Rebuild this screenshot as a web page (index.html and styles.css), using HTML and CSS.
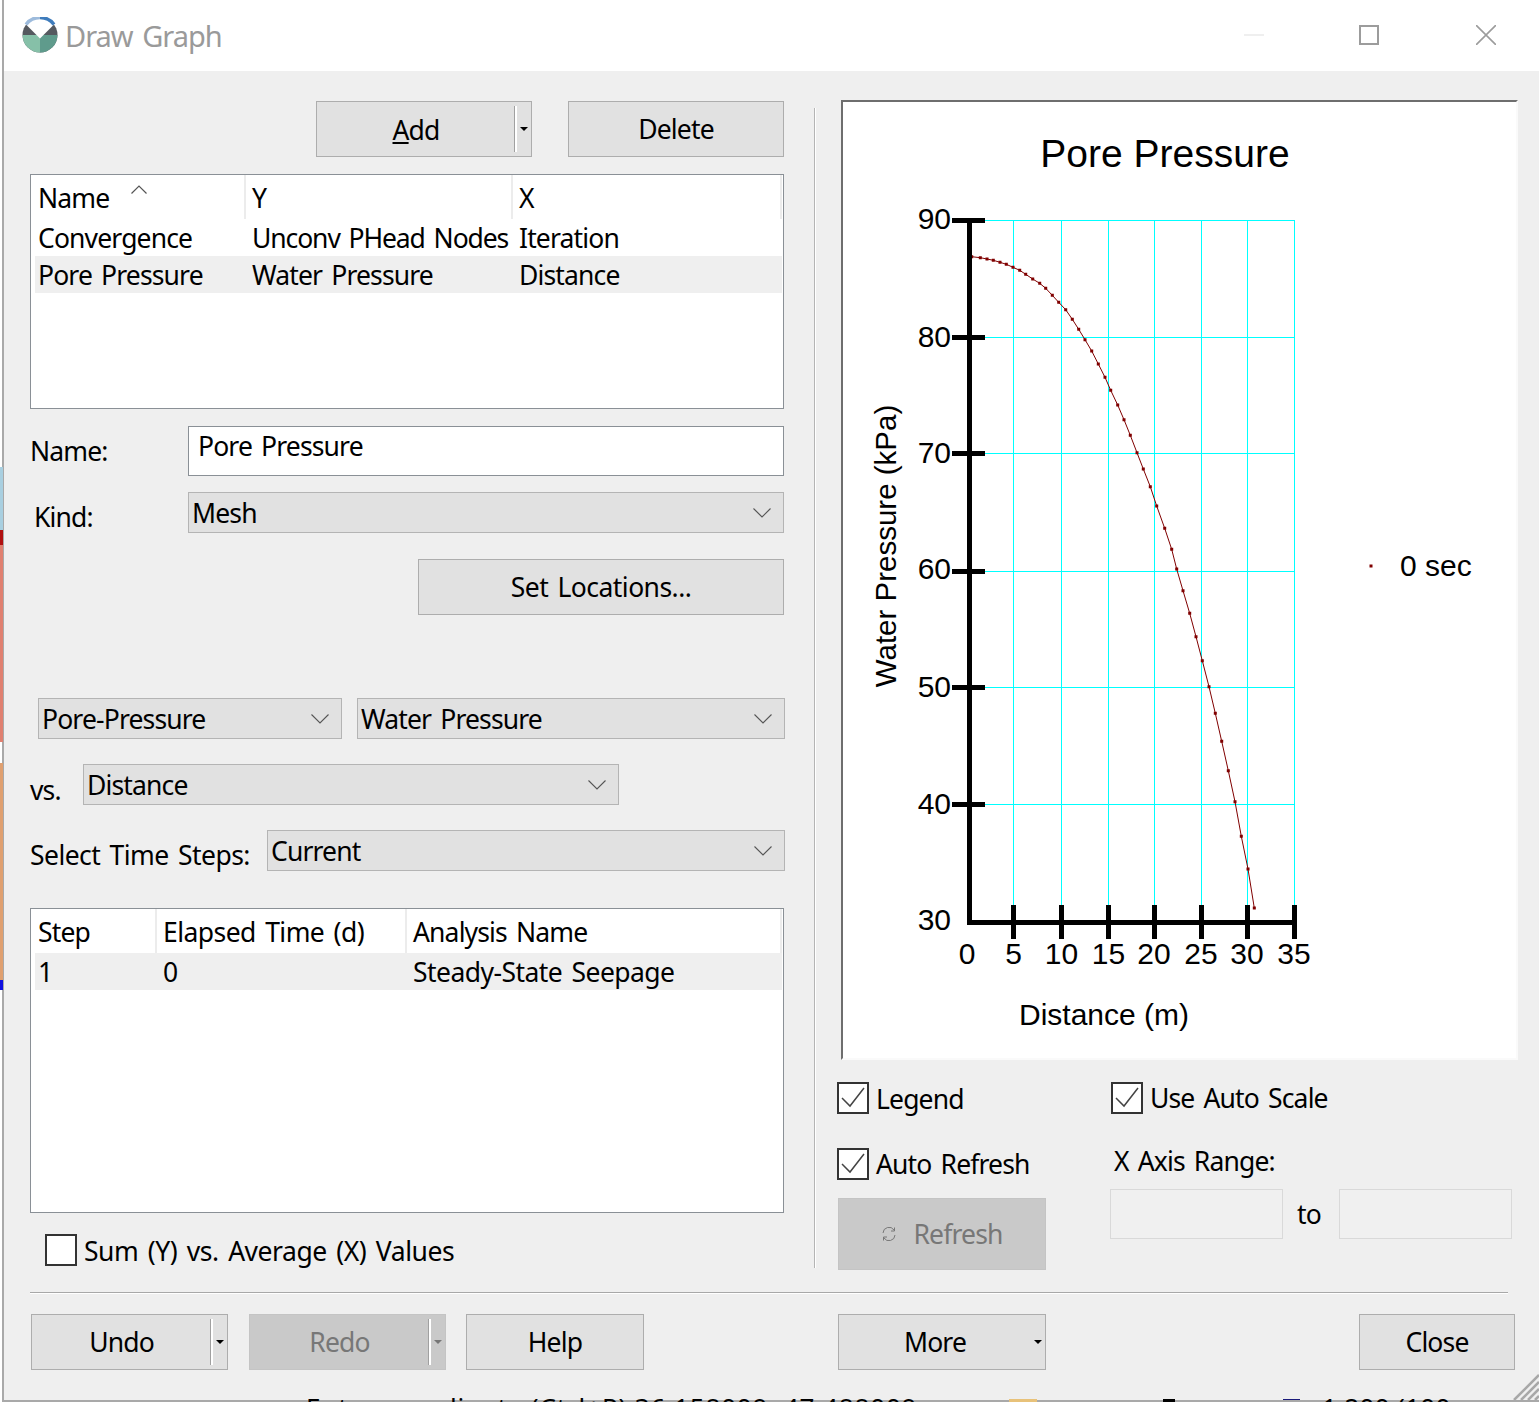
FILE: index.html
```html
<!DOCTYPE html>
<html lang="en">
<head>
<meta charset="utf-8">
<title>Draw Graph</title>
<link rel="stylesheet" href="styles.css">
</head>
<body>
<div class="desktop">
  <div class="strip"><i class="s1"></i><i class="s2"></i><i class="s3"></i><i class="s4"></i><i class="sgap"></i><i class="s5"></i><i class="s6"></i></div>
  <div class="window">
    <header class="titlebar">
      <svg class="logo" viewBox="0 0 36 36" width="36" height="36">
        <circle cx="18" cy="18" r="17.5" fill="#55595f"/>
        <path d="M0.5 18a17.5 17.5 0 0 0 17.5 17.5V18z" fill="#86c0a8"/>
        <path d="M35.5 18a17.5 17.5 0 0 1-17.5 17.5V18z" fill="#5f9b8c"/>
        <path d="M4 7.5A17.5 17.5 0 0 1 32 7.5L18 21.5z" fill="#fff"/>
        <path d="M4 7.5A17.5 17.5 0 0 1 18 .5" fill="none" stroke="#9dbbdc" stroke-width="3.5"/>
        <path d="M18 .5A17.5 17.5 0 0 1 32 7.5" fill="none" stroke="#3f7cbc" stroke-width="3.5"/>
      </svg>
      <span class="title">Draw Graph</span>
      <span class="winbtns">
        <i class="wmin"></i>
        <i class="wmax"></i>
        <svg class="wclose" viewBox="0 0 20 20" width="20" height="20"><path d="M0 0L20 20M20 0L0 20" stroke="#9c9c9c" stroke-width="1.6"/></svg>
      </span>
    </header>
    <div class="main">
      <section class="left">
        <div class="row topbtns">
          <button class="btn add"><span class="btxt"><u>A</u>dd</span><span class="split"><i class="caret"></i></span></button>
          <button class="btn del">Delete</button>
        </div>
        <div class="list graphs">
          <div class="lrow lhead c1"><span class="cell n">Name<svg class="sort" viewBox="0 0 16 9" width="16" height="9"><path d="M.5 8.5L8 1l7.5 7.5" fill="none" stroke="#555" stroke-width="1.2"/></svg></span><span class="cell y">Y</span><span class="cell x">X</span></div>
          <div class="lrow c1"><span class="cell n">Convergence</span><span class="cell y tight">Unconv PHead Nodes</span><span class="cell x">Iteration</span></div>
          <div class="lrow c1 sel"><span class="cell n">Pore Pressure</span><span class="cell y">Water Pressure</span><span class="cell x">Distance</span></div>
        </div>
        <div class="row namerow"><label class="lab">Name:</label><div class="input">Pore Pressure</div></div>
        <div class="row kindrow"><label class="lab kind">Kind:</label><div class="select wide">Mesh<svg class="chev" viewBox="0 0 18 10" width="18" height="10"><path d="M.5 .5L9 9l8.5-8.5" fill="none" stroke="#555" stroke-width="1.1"/></svg></div></div>
        <div class="row setrow"><button class="btn setloc loose">Set Locations...</button></div>
        <div class="row pairrow">
          <div class="select pp">Pore-Pressure<svg class="chev" viewBox="0 0 18 10" width="18" height="10"><path d="M.5 .5L9 9l8.5-8.5" fill="none" stroke="#555" stroke-width="1.1"/></svg></div>
          <div class="select wp">Water Pressure<svg class="chev" viewBox="0 0 18 10" width="18" height="10"><path d="M.5 .5L9 9l8.5-8.5" fill="none" stroke="#555" stroke-width="1.1"/></svg></div>
        </div>
        <div class="row vsrow"><label class="lab vs">vs.</label><div class="select dist">Distance<svg class="chev" viewBox="0 0 18 10" width="18" height="10"><path d="M.5 .5L9 9l8.5-8.5" fill="none" stroke="#555" stroke-width="1.1"/></svg></div></div>
        <div class="row tsrow"><label class="lab ts loose">Select Time Steps:</label><div class="select cur">Current<svg class="chev" viewBox="0 0 18 10" width="18" height="10"><path d="M.5 .5L9 9l8.5-8.5" fill="none" stroke="#555" stroke-width="1.1"/></svg></div></div>
        <div class="list steps">
          <div class="lrow lhead c2"><span class="cell n">Step</span><span class="cell y loose">Elapsed Time (d)</span><span class="cell x">Analysis Name</span></div>
          <div class="lrow c2 sel"><span class="cell n">1</span><span class="cell y">0</span><span class="cell x loose">Steady-State Seepage</span></div>
        </div>
        <div class="row sumrow"><span class="check"></span><span class="sumlab">Sum (Y) vs. Average (X) Values</span></div>
      </section>
      <div class="vline"></div>
      <section class="right">
        <div class="chart">
          <svg viewBox="0 0 675 958" width="675" height="958">
            <g transform="translate(-843 -102)">
              <g class="grid">
                <path d="M969 220.500H1295M969 337.500H1295M969 453.500H1295M969 571.500H1295M969 687.500H1295M969 804.500H1295"/>
                <path d="M1013.500 220V922M1061.500 220V922M1108.500 220V922M1154.500 220V922M1201.500 220V922M1247.500 220V922M1294.500 220V922"/>
              </g>
              <path class="curve" d="M971.700 256.700L980.300 257.700 987 259 993.300 260.300 1000 262.300 1006.300 264.300 1013 267.300 1019.700 270.300 1025.700 274.300 1032.700 279 1039.700 283.300 1045.700 288.300 1052.300 295.300 1058.700 302.300 1065.700 309.700 1072.300 319.300 1078.700 329.300 1085 339.700 1091.700 351 1098.300 364 1105 377.300 1110.700 390.300 1117.700 405 1124 419.700 1130.300 435.300 1137 452.700 1143.300 469 1150.300 486.700 1156.700 506 1164.700 528.300 1171.700 549.300 1176.700 569 1183 590.700 1189.700 613.300 1196 636.700 1202.300 660.700 1209 686.700 1215.300 713.300 1221.700 741.300 1228.300 770.700 1235 801.700 1241.300 836.300 1248 869 1254.300 908"/>
              <path class="dots" d="M971.700 256.700h.01M980.300 257.700h.01M987 259h.01M993.300 260.300h.01M1000 262.300h.01M1006.300 264.300h.01M1013 267.300h.01M1019.700 270.300h.01M1025.700 274.300h.01M1032.700 279h.01M1039.700 283.300h.01M1045.700 288.300h.01M1052.300 295.300h.01M1058.700 302.300h.01M1065.700 309.700h.01M1072.300 319.300h.01M1078.700 329.300h.01M1085 339.700h.01M1091.700 351h.01M1098.300 364h.01M1105 377.300h.01M1110.700 390.300h.01M1117.700 405h.01M1124 419.700h.01M1130.300 435.300h.01M1137 452.700h.01M1143.300 469h.01M1150.300 486.700h.01M1156.700 506h.01M1164.700 528.300h.01M1171.700 549.300h.01M1176.700 569h.01M1183 590.700h.01M1189.700 613.300h.01M1196 636.700h.01M1202.300 660.700h.01M1209 686.700h.01M1215.300 713.300h.01M1221.700 741.300h.01M1228.300 770.700h.01M1235 801.700h.01M1241.300 836.300h.01M1248 869h.01M1254.300 908h.01M1371 566h.01"/>
              <path class="axis" d="M969 220V924.500M967 922H1297M952 220H985M952 337.500H985M952 453.500H985M952 571.500H985M952 687.500H985M952 804.500H985M1013.500 905V939M1061.500 905V939M1108.500 905V939M1154.500 905V939M1201.500 905V939M1247.500 905V939M1294.500 905V939"/>
              <text class="ctitle" x="1165" y="167" text-anchor="middle">Pore Pressure</text>
              <g class="ticks" text-anchor="end">
                <text x="951" y="229">90</text><text x="951" y="347">80</text><text x="951" y="463">70</text><text x="951" y="579">60</text><text x="951" y="697">50</text><text x="951" y="814">40</text><text x="951" y="930">30</text>
              </g>
              <g class="ticks" text-anchor="middle">
                <text x="967" y="964">0</text><text x="1013.500" y="964">5</text><text x="1061.500" y="964">10</text><text x="1108.500" y="964">15</text><text x="1154" y="964">20</text><text x="1201" y="964">25</text><text x="1247" y="964">30</text><text x="1294" y="964">35</text>
              </g>
              <text class="ticks" x="1104" y="1025" text-anchor="middle">Distance (m)</text>
              <text class="ticks ylab" transform="translate(896 546) rotate(-90)" text-anchor="middle">Water Pressure (kPa)</text>
              <text class="ticks" x="1400" y="576">0 sec</text>
            </g>
          </svg>
        </div>
        <div class="options">
          <div class="optcol one">
            <div class="opt"><span class="check on"><svg viewBox="0 0 24 22" width="24" height="22"><path d="M1 11l8 8L23 1" fill="none" stroke="#444" stroke-width="1.5"/></svg></span><span class="leg">Legend</span></div>
            <div class="opt ar"><span class="check on"><svg viewBox="0 0 24 22" width="24" height="22"><path d="M1 11l8 8L23 1" fill="none" stroke="#444" stroke-width="1.5"/></svg></span><span>Auto Refresh</span></div>
            <button class="btn refresh" disabled><svg viewBox="0 0 16 16" width="16" height="16"><path d="M2 7A6 6 0 0 1 13 4M14 9A6 6 0 0 1 3 12" fill="none" stroke="#777" stroke-width="1"/><path d="M13.500 1.500V5H10M2.500 14.500V11H6" fill="none" stroke="#777" stroke-width="1"/></svg><span>Refresh</span></button>
          </div>
          <div class="optcol two">
            <div class="opt scale"><span class="check on"><svg viewBox="0 0 24 22" width="24" height="22"><path d="M1 11l8 8L23 1" fill="none" stroke="#444" stroke-width="1.5"/></svg></span><span>Use Auto Scale</span></div>
            <div class="rangelab">X Axis Range:</div>
            <div class="range"><div class="rinput"></div><span class="to">to</span><div class="rinput"></div></div>
          </div>
        </div>
      </section>
    </div>
    <footer class="footer">
      <div class="hr"></div>
      <div class="fbtns">
        <button class="btn undo"><span class="btxt">Undo</span><span class="split"><i class="caret"></i></span></button>
        <button class="btn undo off" disabled><span class="btxt">Redo</span><span class="split"><i class="caret"></i></span></button>
        <button class="btn help">Help</button>
        <button class="btn more"><span class="btxt">More</span><i class="caret"></i></button>
        <button class="btn close">Close</button>
      </div>
    </footer>
    <svg class="grip" viewBox="0 0 26 26" width="26" height="26"><path d="M26 1L1 26M26 8L8 26M26 15L15 26M26 22L22 26" stroke="#a8a8a8" stroke-width="2.5"/></svg>
  </div>
  <div class="behind coord">Enter coordinate (Ctrl+P) 36.158009, 47.488009</div>
  <i class="chip orange"></i>
  <i class="chip black"></i>
  <i class="chip bluebox"></i>
  <div class="behind scale2">1:200 (100</div>
</div>
</body>
</html>
```
FILE: styles.css
```css
* { box-sizing: border-box; }
html, body { margin: 0; padding: 0; }
body { width: 1539px; height: 1402px; overflow: hidden; background: #fff; font-family: "Noto Sans", "Open Sans", sans-serif; font-size: 26.500px; letter-spacing: -0.85px; word-spacing: 3px; color: #000; }
button { font: inherit; letter-spacing: inherit; word-spacing: inherit; color: inherit; padding: 0; }
.desktop { position: relative; width: 1539px; height: 1402px; display: flex; padding-left: 2px; overflow: hidden; }
.strip { position: absolute; left: 0; top: 0; width: 3px; height: 1402px; display: flex; flex-direction: column; z-index: 2; }
.strip i { display: block; flex: none; }
.s1 { height: 467px; }
.s2 { height: 63px; background: #a9cfe0; }
.s3 { height: 15px; background: #b01010; }
.s4 { height: 197px; background: #e08070; }
.sgap { height: 21px; }
.s5 { height: 217px; background: #e0a070; }
.s6 { height: 10px; background: #1010e0; }
.window { width: 1537px; height: 1402px; flex: none; background: #efefef; border-left: 2px solid #a9a9a9; border-bottom: 2px solid #a9a9a9; display: flex; flex-direction: column; position: relative; z-index: 1; }
.titlebar { height: 71px; background: #fff; display: flex; align-items: center; padding-left: 18px; flex: none; }
.logo { flex: none; margin-top: -1px; }
.title { color: #9a9a9a; font-size: 29px; letter-spacing: -1px; margin-left: 7px; }
.winbtns { margin-left: auto; display: flex; align-items: center; }
.winbtns i { display: block; }
.wmin { width: 20px; height: 2px; background: #efefef; margin-right: 95px; margin-top: -2px; }
.wmax { width: 20px; height: 20px; border: 2px solid #9c9c9c; margin-right: 97px; margin-top: -2px; }
.wclose { margin-right: 43px; margin-top: -2px; }
.main { display: flex; flex: none; height: 1221px; }
.left { width: 783px; padding: 30px 0 0 26px; flex: none; }
.vline { width: 2px; height: 1160px; margin: 37px 0 0 27px; background: #b4b4b4; border-right: 1px solid #fff; flex: none; }
.right { margin-left: 25px; width: 685px; padding-top: 29px; flex: none; }
.row { display: flex; align-items: center; }
.btn { display: flex; align-items: center; justify-content: center; height: 56px; background: #e1e1e1; border: 1px solid #adadad; }
.topbtns { justify-content: flex-end; gap: 36px; width: 754px; }
.add { width: 216px; padding: 4px 0; }
.add .btxt { padding-top: 2px; }
.del { width: 216px; }
.btxt { flex: 1; text-align: center; }
.split { width: 16px; height: 46px; border-left: 2px solid #fff; display: flex; align-items: center; justify-content: center; flex: none; box-shadow: -1px 0 0 #a0a0a0; }
.caret { width: 0; height: 0; border-left: 4px solid transparent; border-right: 4px solid transparent; border-top: 4px solid #000; display: block; }
.list { width: 754px; background: #fff; border: 1px solid #8a9096; }
.graphs { height: 235px; margin-top: 17px; }
.steps { height: 305px; margin-top: 37px; }
.lrow { display: grid; line-height: 39px; height: 37px; margin: 0 1px 0 4px; }
.c1 { grid-template-columns: 211px 267px 1fr; }
.c2 { grid-template-columns: 122px 250px 1fr; }
.lhead { height: 44px; line-height: 46px; }
.lhead .cell { border-right: 2px solid #ececec; height: 44px; }
.sel { background: #efefef; }
.cell { padding-left: 3px; white-space: nowrap; position: relative; }
.cell.y { padding-left: 6px; }
.cell.x { padding-left: 6px; }
.cell.tight { letter-spacing: -1.1px; }
.loose, .cell.loose { letter-spacing: -0.55px; }
.sort { position: absolute; left: 96px; top: 10px; }
.lab { display: block; }
.namerow { margin-top: 17px; height: 50px; }
.namerow .lab { width: 158px; }
.input { width: 596px; height: 50px; background: #fff; border: 1px solid #8a9096; padding: 0 9px; line-height: 38px; }
.kindrow { margin-top: 16px; height: 41px; }
.kindrow .lab { width: 158px; padding-left: 4px; padding-top: 8px; }
.select { position: relative; height: 41px; background: #e1e1e1; border: 1px solid #b4b4b4; padding-left: 3px; line-height: 40px; white-space: nowrap; }
.chev { position: absolute; right: 12px; top: 15px; }
.wide { width: 596px; }
.setrow { margin-top: 26px; justify-content: flex-end; width: 754px; }
.setloc { width: 366px; }
.pairrow { margin-top: 83px; padding-left: 8px; gap: 15px; }
.pp { width: 304px; }
.wp { width: 428px; }
.vsrow { margin-top: 25px; height: 41px; }
.vs { width: 53px; padding-top: 10px; }
.dist { width: 536px; }
.tsrow { margin-top: 25px; height: 41px; }
.ts { width: 237px; padding-top: 8px; }
.cur { width: 518px; }
.sumrow { margin-top: 21px; padding-left: 15px; gap: 7px; height: 32px; }
.sumlab { letter-spacing: -0.45px; padding-top: 2px; }
.check { display: flex; align-items: center; justify-content: center; width: 32px; height: 32px; background: #fff; border: 2px solid #333; flex: none; }
.chart { width: 677px; height: 960px; background: #fff; border: 2px solid; border-color: #6e6e6e #fafafa #fafafa #6e6e6e; overflow: hidden; letter-spacing: 0; word-spacing: 0; }
.chart svg { display: block; }
.grid path { stroke: #00ffff; stroke-width: 1; fill: none; shape-rendering: crispEdges; }
.curve { fill: none; stroke: #800000; stroke-width: 1; }
.dots { fill: none; stroke: #800000; stroke-width: 3; stroke-linecap: square; }
.axis { fill: none; stroke: #000; stroke-width: 5; shape-rendering: crispEdges; }
.ctitle { font: 39px "Liberation Sans", Arial, sans-serif; fill: #000; }
.ticks, .ticks text { font: 30px "Liberation Sans", Arial, sans-serif; fill: #000; }
.ticks.ylab { font-size: 29.500px; }
.options { display: flex; margin: 22px 0 0 -3px; }
.optcol.one { width: 274px; }
.opt { display: flex; align-items: center; gap: 7px; height: 32px; white-space: nowrap; margin-left: -1px; }
.leg { padding-top: 2px; }
.opt.ar { margin-top: 34px; }
.refresh { width: 208px; height: 72px; margin-top: 18px; background: #c9c9c9; border-color: #c4c4c4; color: #777; gap: 16px; }
.rangelab { padding-left: 2px; margin-top: 29px; line-height: 36px; }
.range { display: flex; align-items: center; margin: 10px 0 0 -2px; }
.rinput { width: 173px; height: 50px; background: #f0f0f0; border: 1px solid #d9d9d9; }
.to { width: 56px; padding-left: 14px; }
.footer { flex: none; padding-left: 26px; }
.hr { width: 1478px; height: 2px; background: #a8a8a8; border-bottom: 1px solid #fff; }
.fbtns { display: flex; margin-top: 20px; padding-left: 1px; }
.undo { width: 197px; padding: 4px 0; }
.undo.off { margin-left: 21px; background: #c9c9c9; border-color: #c4c4c4; color: #777; }
.undo.off .caret { border-top-color: #777; }
.help { width: 178px; margin-left: 20px; }
.more { width: 208px; margin-left: 194px; padding-right: 3px; }
.more .btxt { padding-right: 3px; }
.close { width: 156px; margin-left: 313px; }
.grip { position: absolute; right: 0; bottom: 0; }
.behind { position: absolute; top: 1389px; font-size: 26px; word-spacing: 0; z-index: 2; white-space: nowrap; clip-path: inset(9px 0 0 0); }
.coord { left: 306px; letter-spacing: 0.85px; }
.scale2 { left: 1322px; letter-spacing: 0.3px; }
.chip { position: absolute; top: 1399px; height: 3px; z-index: 2; }
.orange { left: 1009px; width: 28px; background: #e8c27a; }
.black { left: 1163px; width: 12px; background: #000; }
.bluebox { left: 1283px; width: 17px; border-top: 1px solid #1a1a7a; }
```
